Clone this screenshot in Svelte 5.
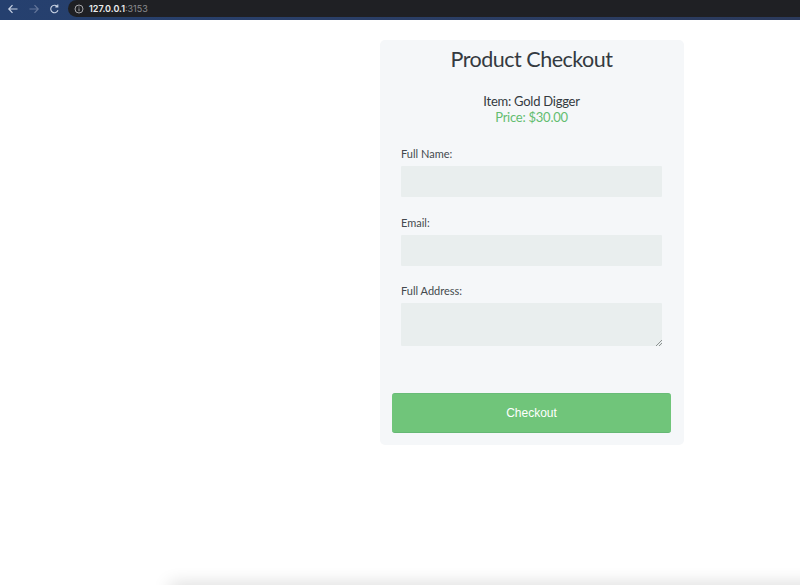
<script>
	let fullName = $state('');
	let email = $state('');
	let address = $state('');
</script>

<div class="window">
	<header class="browser-bar">
		<div class="nav">
			<svg width="12" height="12" viewBox="0 0 12 12"><path d="M10.5 6H2M5.5 2.2 1.8 6l3.7 3.8" /></svg>
			<svg class="off" width="12" height="12" viewBox="0 0 12 12"><path d="M1.5 6H10M6.5 2.2 10.2 6 6.5 9.8" /></svg>
			<svg width="11" height="12" viewBox="0 0 12 12"><path d="M9.8 7.4A4.1 4.1 0 1 1 9 3.2M9.6 1v2.7H6.9" /></svg>
		</div>
		<div class="address">
			<svg width="10" height="10" viewBox="0 0 10 10"><circle cx="5" cy="5" r="4" /><path d="M5 4.4v2.8M5 2.6v.9" /></svg>
			<span class="host">127.0.0.1<span class="port">:3153</span></span>
		</div>
	</header>

	<main class="page">
		<section class="card">
			<h1>Product Checkout</h1>
			<div class="summary">
				<p>Item: Gold Digger</p>
				<p class="price">Price: $30.00</p>
			</div>
			<form class="fields" onsubmit={(e) => e.preventDefault()}>
				<div class="field">
					<label for="name">Full Name:</label>
					<input id="name" type="text" bind:value={fullName} />
				</div>
				<div class="field">
					<label for="email">Email:</label>
					<input id="email" type="email" bind:value={email} />
				</div>
				<div class="field">
					<label for="address">Full Address:</label>
					<textarea id="address" bind:value={address}></textarea>
				</div>
				<button type="submit">Checkout</button>
			</form>
		</section>
	</main>
	<div class="bottom-shadow"></div>
</div>

<style>
	:global(body) {
		margin: 0;
		background: #fff;
	}

	.window {
		position: relative;
		height: 585px;
		overflow: hidden;
		font-family: 'Lato', 'Noto Sans', sans-serif;
		color: #343a40;
	}

	.browser-bar {
		display: flex;
		height: 20px;
		background: linear-gradient(90deg, #25406f, #2a3f68 40%, #2b3a5c);
	}

	.nav {
		display: flex;
		align-items: center;
		gap: 9px;
		width: 61px;
		padding: 0 0 3px 7px;
		box-sizing: content-box;
		height: 17px;
	}

	.nav svg,
	.address svg {
		fill: none;
		stroke: #c9d3e4;
		stroke-width: 1.2;
		flex-shrink: 0;
	}

	.nav svg.off {
		stroke: #65779b;
	}

	.address {
		flex: 1;
		display: flex;
		align-items: center;
		gap: 5px;
		height: 17px;
		padding-left: 6px;
		background: #1f2024;
		border-radius: 9px 0 0 9px;
	}

	.address svg {
		stroke: #b5b5b8;
		stroke-width: 0.9;
	}

	.host {
		font-family: 'Inter', sans-serif;
		font-size: 9px;
		font-weight: 600;
		color: #eceded;
	}

	.port {
		font-weight: 400;
		color: #8c8d90;
	}

	.page {
		display: flex;
		justify-content: flex-end;
		padding: 20px 116px 0 0;
	}

	.card {
		width: 304px;
		height: 405px;
		box-sizing: border-box;
		padding: 0 13px 0 12px;
		background: #f5f7f9;
		border-radius: 5px;
	}

	h1 {
		margin: 0;
		padding-top: 3px;
		font-size: 21.5px;
		letter-spacing: -0.5px;
		line-height: 33px;
		font-weight: 400;
		text-align: center;
		color: #343a40;
	}

	.summary {
		margin-top: 17px;
		text-align: center;
		font-size: 13px;
		letter-spacing: -0.25px;
		line-height: 16px;
	}

	.summary p {
		margin: 0;
	}

	.price {
		color: #63bd70;
	}

	.fields {
		display: flex;
		flex-direction: column;
		margin-top: 21px;
	}

	.field {
		display: flex;
		flex-direction: column;
		margin: 0 9px 17.5px;
	}

	label {
		font-size: 11px;
		line-height: 16px;
		margin-bottom: 4px;
		color: #444a4e;
	}

	input,
	textarea {
		display: block;
		box-sizing: border-box;
		width: 100%;
		border: none;
		background: #e9eeee;
		border-radius: 1px;
		outline: none;
		padding: 0 8px;
	}

	input {
		height: 31px;
	}

	textarea {
		height: 42.5px;
		resize: vertical;
	}

	textarea::-webkit-resizer {
		background: linear-gradient(135deg, transparent 52%, #8d9292 52% 60%, transparent 60% 74%, #8d9292 74% 82%, transparent 82%) right bottom / 7px 7px no-repeat;
	}

	button {
		margin-top: 30px;
		height: 39.5px;
		border: none;
		border-bottom: 1px solid #65b874;
		border-top: 1px solid #69bc78;
		border-radius: 3px;
		background: #70c57a;
		color: #fff;
		font-family: 'Liberation Sans', Arial, sans-serif;
		font-size: 12px;
	}

	.bottom-shadow {
		position: absolute;
		left: 170px;
		right: -40px;
		bottom: -11px;
		height: 11px;
		box-shadow: 0 0 18px rgba(0, 0, 0, 0.2);
	}
</style>
